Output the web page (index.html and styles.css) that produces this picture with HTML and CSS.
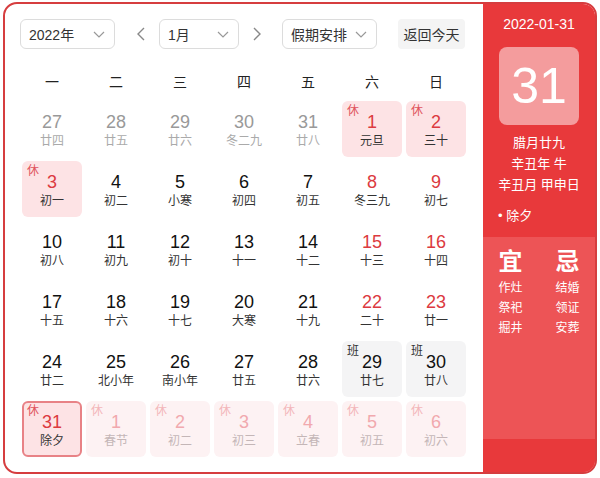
FILE: index.html
```html
<!DOCTYPE html>
<html lang="zh">
<head>
<meta charset="utf-8">
<link rel="stylesheet" href="styles.css">
</head>
<body>
<div class="cal">
  <div class="main">
    <div class="controls">
      <div class="select year"><span>2022年</span><svg width="12" height="7" viewBox="0 0 12 7"><polyline points="1,1 6,6 11,1" fill="none" stroke="#999" stroke-width="1.2"/></svg></div>
      <div class="arrow prev"><svg width="9" height="14" viewBox="0 0 9 14"><polyline points="8,1 2,7 8,13" fill="none" stroke="#888" stroke-width="1.4"/></svg></div>
      <div class="select month"><span>1月</span><svg width="12" height="7" viewBox="0 0 12 7"><polyline points="1,1 6,6 11,1" fill="none" stroke="#999" stroke-width="1.2"/></svg></div>
      <div class="arrow next"><svg width="9" height="14" viewBox="0 0 9 14"><polyline points="1,1 7,7 1,13" fill="none" stroke="#888" stroke-width="1.4"/></svg></div>
      <div class="select holiday"><span>假期安排</span><svg width="12" height="7" viewBox="0 0 12 7"><polyline points="1,1 6,6 11,1" fill="none" stroke="#999" stroke-width="1.2"/></svg></div>
      <div class="today-btn">返回今天</div>
    </div>
    <div class="weekdays">
      <span>一</span><span>二</span><span>三</span><span>四</span><span>五</span><span>六</span><span>日</span>
    </div>
    <div class="grid">
      <div class="cell other"><b>27</b><i>廿四</i></div>
      <div class="cell other"><b>28</b><i>廿五</i></div>
      <div class="cell other"><b>29</b><i>廿六</i></div>
      <div class="cell other"><b>30</b><i>冬二九</i></div>
      <div class="cell other"><b>31</b><i>廿八</i></div>
      <div class="cell rest"><em>休</em><b>1</b><i>元旦</i></div>
      <div class="cell rest"><em>休</em><b>2</b><i>三十</i></div>

      <div class="cell rest"><em>休</em><b>3</b><i>初一</i></div>
      <div class="cell"><b>4</b><i>初二</i></div>
      <div class="cell"><b>5</b><i>小寒</i></div>
      <div class="cell"><b>6</b><i>初四</i></div>
      <div class="cell"><b>7</b><i>初五</i></div>
      <div class="cell wkend"><b>8</b><i>冬三九</i></div>
      <div class="cell wkend"><b>9</b><i>初七</i></div>

      <div class="cell"><b>10</b><i>初八</i></div>
      <div class="cell"><b>11</b><i>初九</i></div>
      <div class="cell"><b>12</b><i>初十</i></div>
      <div class="cell"><b>13</b><i>十一</i></div>
      <div class="cell"><b>14</b><i>十二</i></div>
      <div class="cell wkend"><b>15</b><i>十三</i></div>
      <div class="cell wkend"><b>16</b><i>十四</i></div>

      <div class="cell"><b>17</b><i>十五</i></div>
      <div class="cell"><b>18</b><i>十六</i></div>
      <div class="cell"><b>19</b><i>十七</i></div>
      <div class="cell"><b>20</b><i>大寒</i></div>
      <div class="cell"><b>21</b><i>十九</i></div>
      <div class="cell wkend"><b>22</b><i>二十</i></div>
      <div class="cell wkend"><b>23</b><i>廿一</i></div>

      <div class="cell"><b>24</b><i>廿二</i></div>
      <div class="cell"><b>25</b><i>北小年</i></div>
      <div class="cell"><b>26</b><i>南小年</i></div>
      <div class="cell"><b>27</b><i>廿五</i></div>
      <div class="cell"><b>28</b><i>廿六</i></div>
      <div class="cell work"><em>班</em><b>29</b><i>廿七</i></div>
      <div class="cell work"><em>班</em><b>30</b><i>廿八</i></div>

      <div class="cell rest current"><em>休</em><b>31</b><i>除夕</i></div>
      <div class="cell rest faded"><em>休</em><b>1</b><i>春节</i></div>
      <div class="cell rest faded"><em>休</em><b>2</b><i>初二</i></div>
      <div class="cell rest faded"><em>休</em><b>3</b><i>初三</i></div>
      <div class="cell rest faded"><em>休</em><b>4</b><i>立春</i></div>
      <div class="cell rest faded"><em>休</em><b>5</b><i>初五</i></div>
      <div class="cell rest faded"><em>休</em><b>6</b><i>初六</i></div>
    </div>
  </div>
  <div class="side">
    <div class="side-top">
      <div class="side-date">2022-01-31</div>
      <div class="big-day">31</div>
      <div class="lunar">
        <div>腊月廿九</div>
        <div>辛丑年 牛</div>
        <div>辛丑月 甲申日</div>
      </div>
      <div class="festival">• 除夕</div>
    </div>
    <div class="side-mid">
      <div class="col">
        <div class="col-head">宜</div>
        <div>作灶</div>
        <div>祭祀</div>
        <div>掘井</div>
      </div>
      <div class="col">
        <div class="col-head">忌</div>
        <div>结婚</div>
        <div>领证</div>
        <div>安葬</div>
      </div>
    </div>
    <div class="side-bottom"></div>
  </div>
</div>
</body>
</html>
```

FILE: styles.css
```css
* { box-sizing: border-box; }
html, body { margin: 0; padding: 0; background: #fff; }
body {
  font-family: "Liberation Sans", "Noto Sans CJK SC", sans-serif;
  color: #333;
}
.cal {
  margin: 2px 0 0 3px;
  width: 594px;
  height: 472px;
  border: 2px solid #d63d3f;
  border-radius: 14px;
  overflow: hidden;
  display: flex;
  background: #fff;
}
.main {
  width: 478px;
  flex: none;
  padding: 15px 0 0 0;
}
.controls {
  display: flex;
  align-items: center;
  height: 30px;
  padding-left: 15px;
}
.select {
  height: 30px;
  border: 1px solid #dcdcdc;
  border-radius: 6px;
  display: flex;
  align-items: center;
  justify-content: space-between;
  padding: 0 9px 0 8px;
  font-size: 14px;
  color: #333;
}
.select svg { display: block; }
.year { width: 95px; }
.month { width: 80px; }
.holiday { width: 95px; }
.arrow {
  width: 24px;
  height: 30px;
  display: flex;
  align-items: center;
  justify-content: center;
}
.prev { margin: 0 7px 0 13px; }
.next { margin: 0 13px 0 6px; }
.today-btn {
  margin-left: 21px;
  width: 67px;
  height: 30px;
  background: #f4f4f4;
  border-radius: 4px;
  font-size: 14px;
  color: #333;
  display: flex;
  align-items: center;
  justify-content: center;
}
.weekdays {
  margin: 22px 0 8px 17px;
  display: grid;
  grid-template-columns: repeat(7, 60px);
  column-gap: 4px;
  height: 22px;
  line-height: 22px;
  font-size: 14px;
  color: #222;
  text-align: center;
}
.grid {
  margin-left: 17px;
  display: grid;
  grid-template-columns: repeat(7, 60px);
  grid-auto-rows: 56px;
  gap: 4px;
}
.cell {
  position: relative;
  border-radius: 6px;
  display: flex;
  flex-direction: column;
  align-items: center;
  padding-top: 11px;
}
.cell b {
  font-weight: normal;
  font-size: 18px;
  line-height: 20px;
  color: #111;
}
.cell i {
  font-style: normal;
  font-size: 12px;
  line-height: 16px;
  margin-top: 1px;
  color: #333;
}
.cell em {
  position: absolute;
  left: 5px;
  top: 3px;
  font-style: normal;
  font-size: 12px;
  line-height: 14px;
  color: #e0545c;
}
.other b { color: #999; }
.other i { color: #aaa; }
.wkend b { color: #dc3a40; }
.rest { background: #fde3e5; }
.rest b { color: #dc3a40; }
.work { background: #f4f4f5; }
.work em { color: #333; }
.current {
  border: 2px solid #e88286;
  padding-top: 9px;
}
.current em { left: 3px; top: 1px; }
.faded { background: #fdf2f3; }
.faded b { color: #f1a9ae; }
.faded i { color: #c4b6b7; }
.faded em { color: #f3b6ba; }

.side {
  flex: 1;
  display: flex;
  flex-direction: column;
  color: #fff;
  background: #e8393b;
}
.side-top {
  height: 233px;
  padding-top: 10px;
  display: flex;
  flex-direction: column;
  align-items: center;
}
.side-date {
  font-size: 14px;
  line-height: 20px;
}
.big-day {
  margin-top: 13px;
  width: 80px;
  height: 78px;
  border-radius: 8px;
  background: #f49c9d;
  font-size: 50px;
  line-height: 78px;
  text-align: center;
}
.lunar {
  margin-top: 7px;
  font-size: 13px;
  line-height: 21px;
  text-align: center;
}
.festival {
  align-self: flex-start;
  margin: 11px 0 0 15px;
  font-size: 13px;
  line-height: 20px;
}
.side-mid {
  height: 202px;
  background: #ed5456;
  display: flex;
  justify-content: center;
  gap: 33px;
  padding-top: 12px;
}
.col {
  width: 24px;
  display: flex;
  flex-direction: column;
  align-items: center;
  font-size: 12px;
  line-height: 20px;
}
.col-head {
  font-size: 24px;
  font-weight: bold;
  line-height: 26px;
  margin-bottom: 3px;
}
.side-bottom {
  flex: 1;
  background: #e8393b;
}
```
